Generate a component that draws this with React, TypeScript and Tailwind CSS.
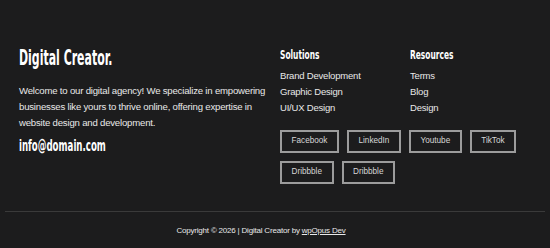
const socials = ["Facebook", "LinkedIn", "Youtube", "TikTok", "Dribbble", "Dribbble"];

const condensed = { fontFamily: '"DejaVu Sans Condensed", "DejaVu Sans", sans-serif' };

const Heading = ({ text, className, squeeze }: { text: string; className: string; squeeze: string }) => (
  <div style={condensed} className={className}>
    <span className={`inline-block origin-left whitespace-nowrap ${squeeze}`}>{text}</span>
  </div>
);

export default function App() {
  return (
    <div
      className="w-[550px] h-[248px] bg-[#1c1c1d] text-white overflow-hidden"
      style={{ fontFamily: '"Liberation Sans", Arial, sans-serif' }}
    >
      <div className="flex pt-[45px] px-[19px] h-[211px]">
        <div className="w-[261px]">
          <Heading text="Digital Creator." squeeze="scale-x-[0.58]" className="text-[21px] font-bold leading-[26px]" />
          <p className="mt-[12px] text-[9.6px] leading-[16px] tracking-[-0.2px] text-[#e8e8e8]">
            Welcome to our digital agency! We specialize in empowering businesses like yours to thrive online, offering expertise in website design and development.
          </p>
          <Heading text="info@domain.com" squeeze="scale-x-[0.64]" className="mt-[5px] text-[15px] font-bold leading-[20px]" />
        </div>
        <div className="flex flex-col">
          <div className="flex">
            <div className="w-[130px]">
              <Heading text="Solutions" squeeze="scale-x-[0.64]" className="text-[13px] font-bold leading-[18px] mt-[1px]" />
              <ul className="mt-[4px] text-[9.5px] leading-[16px] tracking-[-0.2px] text-[#e8e8e8]">
                <li>Brand Development</li>
                <li>Graphic Design</li>
                <li>UI/UX Design</li>
              </ul>
            </div>
            <div>
              <Heading text="Resources" squeeze="scale-x-[0.64]" className="text-[13px] font-bold leading-[18px] mt-[1px]" />
              <ul className="mt-[4px] text-[9.5px] leading-[16px] tracking-[-0.2px] text-[#e8e8e8]">
                <li>Terms</li>
                <li>Blog</li>
                <li>Design</li>
              </ul>
            </div>
          </div>
          <div className="mt-[14px] flex flex-wrap gap-[8px] w-[250px]">
            {socials.map((s, i) => (
              <a
                key={i}
                className="h-[23px] px-[9.5px] flex items-center border-2 border-[#9c9c9c] text-[8.2px] text-[#d6d6d6]"
              >
                {s}
              </a>
            ))}
          </div>
        </div>
      </div>
      <div className="mx-[5px] border-t border-[#3a3a3a]" />
      <p className="mt-[13px] pr-[28px] text-center text-[8px] tracking-[-0.2px] text-[#e8e8e8]">
        Copyright © 2026 | Digital Creator by <span className="underline">wpOpus Dev</span>
      </p>
    </div>
  );
}
